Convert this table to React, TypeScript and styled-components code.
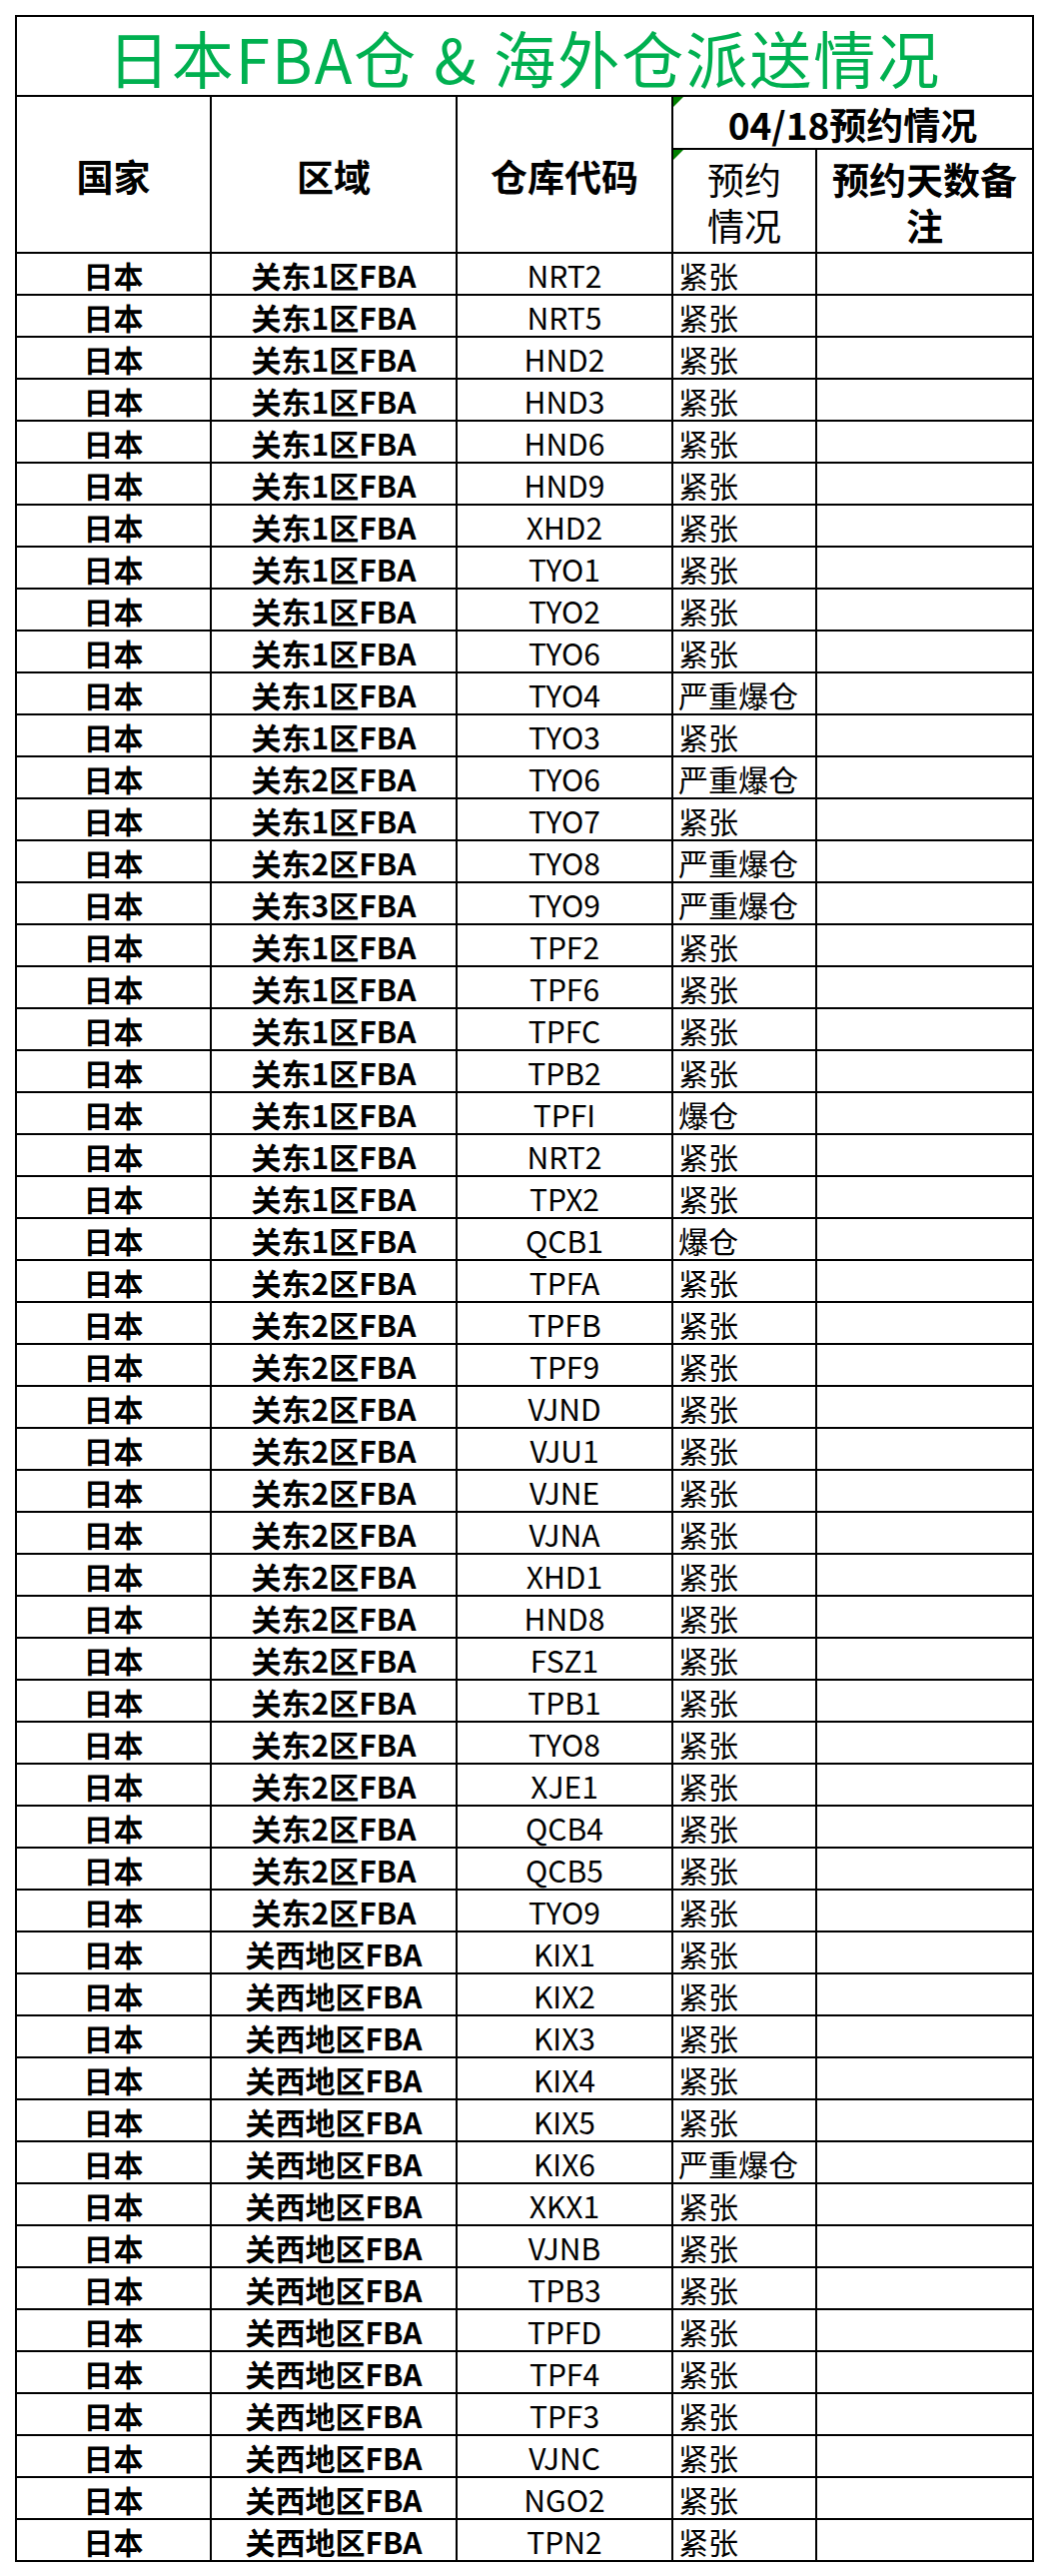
import React from "react";
import styled, { createGlobalStyle } from "styled-components";

const Global = createGlobalStyle`
  html, body { margin: 0; padding: 0; background: #fff; }
  body {
    font-family: "Noto Sans CJK SC", "Noto Sans", sans-serif;
    color: #000;
  }
`;

const Page = styled.div`
  box-sizing: border-box;
  min-height: 2578px;
  padding: 15px 0 0 15px;
`;

const Sheet = styled.div`
  box-sizing: border-box;
  display: grid;
  width: 1020px;
  grid-template-columns: 193px 244px 214px 142px 215px;
  grid-template-rows: 78px 51px 102px;
  grid-auto-rows: 40px;
  gap: 2px;
  padding: 2px;
  background: #000;
`;

const Base = styled.div`
  position: relative;
  box-sizing: border-box;
  background: #fff;
  display: flex;
  align-items: center;
  min-width: 0;
`;

const TitleCell = styled(Base)`
  grid-column: 1 / -1;
  justify-content: center;
  padding-top: 4px;
  font-size: 62px;
  line-height: 1.15;
  letter-spacing: 2px;
  font-weight: 400;
  color: #00b050;
  white-space: nowrap;
`;

const HeadCell = styled(Base)<{ $col: string; $row: string; $flag?: boolean; $light?: boolean }>`
  grid-column: ${(p) => p.$col};
  grid-row: ${(p) => p.$row};
  justify-content: center;
  text-align: center;
  padding-top: 2px;
  font-size: 37px;
  line-height: 46px;
  font-weight: ${(p) => (p.$light ? 400 : 700)};
  &::before {
    content: "";
    display: ${(p) => (p.$flag ? "block" : "none")};
    position: absolute;
    top: 0;
    left: 0;
    width: 0;
    height: 0;
    border-style: solid;
    border-width: 10px 10px 0 0;
    border-color: #008000 transparent transparent transparent;
  }
`;

const Cell = styled(Base)<{ $bold?: boolean; $left?: boolean }>`
  justify-content: ${(p) => (p.$left ? "flex-start" : "center")};
  padding: 2px 0 0 ${(p) => (p.$left ? "5px" : "0")};
  font-size: 30px;
  line-height: 36px;
  font-weight: ${(p) => (p.$bold ? 700 : 400)};
  white-space: nowrap;
`;

type Row = [string, string, string];

const K1 = "关东1区FBA";
const K2 = "关东2区FBA";
const K3 = "关东3区FBA";
const KS = "关西地区FBA";
const T = "紧张";
const S = "严重爆仓";
const B = "爆仓";

const rows: Row[] = [
  [K1, "NRT2", T],
  [K1, "NRT5", T],
  [K1, "HND2", T],
  [K1, "HND3", T],
  [K1, "HND6", T],
  [K1, "HND9", T],
  [K1, "XHD2", T],
  [K1, "TYO1", T],
  [K1, "TYO2", T],
  [K1, "TYO6", T],
  [K1, "TYO4", S],
  [K1, "TYO3", T],
  [K2, "TYO6", S],
  [K1, "TYO7", T],
  [K2, "TYO8", S],
  [K3, "TYO9", S],
  [K1, "TPF2", T],
  [K1, "TPF6", T],
  [K1, "TPFC", T],
  [K1, "TPB2", T],
  [K1, "TPFI", B],
  [K1, "NRT2", T],
  [K1, "TPX2", T],
  [K1, "QCB1", B],
  [K2, "TPFA", T],
  [K2, "TPFB", T],
  [K2, "TPF9", T],
  [K2, "VJND", T],
  [K2, "VJU1", T],
  [K2, "VJNE", T],
  [K2, "VJNA", T],
  [K2, "XHD1", T],
  [K2, "HND8", T],
  [K2, "FSZ1", T],
  [K2, "TPB1", T],
  [K2, "TYO8", T],
  [K2, "XJE1", T],
  [K2, "QCB4", T],
  [K2, "QCB5", T],
  [K2, "TYO9", T],
  [KS, "KIX1", T],
  [KS, "KIX2", T],
  [KS, "KIX3", T],
  [KS, "KIX4", T],
  [KS, "KIX5", T],
  [KS, "KIX6", S],
  [KS, "XKX1", T],
  [KS, "VJNB", T],
  [KS, "TPB3", T],
  [KS, "TPFD", T],
  [KS, "TPF4", T],
  [KS, "TPF3", T],
  [KS, "VJNC", T],
  [KS, "NGO2", T],
  [KS, "TPN2", T],
];

export default function App() {
  return (
    <>
      <Global />
      <Page>
        <Sheet>
          <TitleCell>日本FBA仓 &amp; 海外仓派送情况</TitleCell>
          <HeadCell $col="1" $row="2 / span 2">国家</HeadCell>
          <HeadCell $col="2" $row="2 / span 2">区域</HeadCell>
          <HeadCell $col="3" $row="2 / span 2">仓库代码</HeadCell>
          <HeadCell $col="4 / span 2" $row="2" $flag>
            04/18预约情况
          </HeadCell>
          <HeadCell $col="4" $row="3" $flag $light>
            预约
            <br />
            情况
          </HeadCell>
          <HeadCell $col="5" $row="3">
            预约天数备
            <br />注
          </HeadCell>
          {rows.map(([area, code, status], i) => (
            <React.Fragment key={i}>
              <Cell $bold>日本</Cell>
              <Cell $bold>{area}</Cell>
              <Cell>{code}</Cell>
              <Cell $left>{status}</Cell>
              <Cell />
            </React.Fragment>
          ))}
        </Sheet>
      </Page>
    </>
  );
}
